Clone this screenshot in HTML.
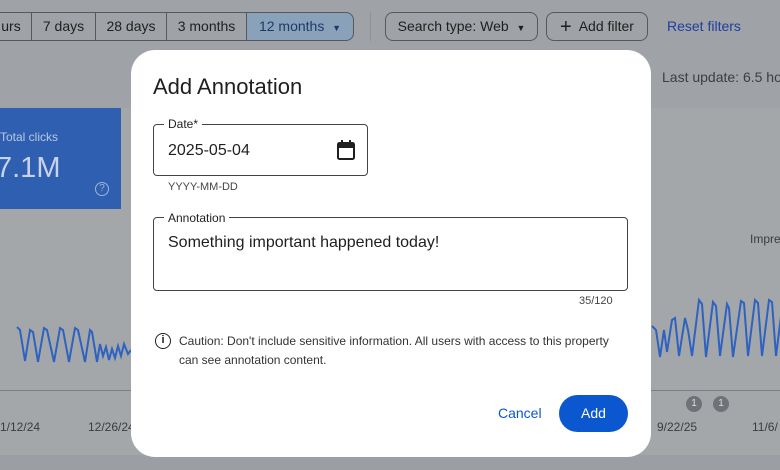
<!DOCTYPE html>
<html><head><style>
*{margin:0;padding:0;box-sizing:border-box}
body{width:780px;height:470px;overflow:hidden;background:#9fa2a6;font-family:"Liberation Sans",sans-serif;position:relative}
.a{position:absolute}
.chip{position:absolute;top:12px;height:29px;border:1px solid #55585c;font-size:14px;color:#1f1f1f;line-height:27px;text-align:center}
</style></head><body>
<div class="a" style="left:0;top:108px;width:780px;height:347px;background:#a4a7aa"></div>
<div class="a" style="left:0;top:455px;width:780px;height:15px;background:#9b9ea2"></div>
<div class="chip" style="left:-10px;width:42px;border-radius:0">urs</div>
<div class="chip" style="left:31px;width:65px">7 days</div>
<div class="chip" style="left:95px;width:72px">28 days</div>
<div class="chip" style="left:166px;width:81px">3 months</div>
<div class="chip" style="left:246px;width:108px;background:#8aa2b9;border-radius:0 8px 8px 0;color:#1d3a6b">12 months &nbsp;<span style="font-size:9px">▼</span></div>
<div class="a" style="left:370px;top:12px;width:1px;height:29px;background:#8e9195"></div>
<div class="chip" style="left:385px;width:153px;border-radius:8px">Search type: Web &nbsp;<span style="font-size:9px">▼</span></div>
<div class="chip" style="left:546px;width:102px;border-radius:8px"><span style="font-size:20px;vertical-align:-2px">+</span>&nbsp; Add filter</div>
<div class="a" style="left:667px;top:18px;font-size:14px;color:#1f3fa0">Reset filters</div>
<div class="a" style="left:662px;top:69px;font-size:14px;color:#3c3e41;white-space:nowrap">Last update: 6.5 ho</div>
<div class="a" style="left:0;top:108px;width:121px;height:101px;background:#2f5fb0"></div>
<div class="a" style="left:0;top:130px;font-size:12px;color:#b9c8e4">Total clicks</div>
<div class="a" style="left:-4px;top:152px;font-size:29px;color:#c7d3ea">7.1M</div>
<div class="a" style="left:95px;top:182px;width:14px;height:14px;border:1px solid #9fb3d8;border-radius:50%;font-size:10px;color:#9fb3d8;text-align:center;line-height:12px">?</div>
<div class="a" style="left:750px;top:232px;font-size:12px;color:#3a3c3f">Impre</div>
<div class="a" style="left:0;top:390px;width:780px;height:1px;background:#7c7f83"></div>
<div class="a" style="left:0;top:420px;font-size:12px;color:#3a3c3f">1/12/24</div>
<div class="a" style="left:88px;top:420px;font-size:12px;color:#3a3c3f">12/26/24</div>
<div class="a" style="left:657px;top:420px;font-size:12px;color:#3a3c3f">9/22/25</div>
<div class="a" style="left:752px;top:420px;font-size:12px;color:#3a3c3f">11/6/</div>
<div class="a" style="left:686px;top:396px;width:16px;height:16px;border-radius:50%;background:#6f7276;color:#ddd;font-size:10px;text-align:center;line-height:16px">1</div>
<div class="a" style="left:713px;top:396px;width:16px;height:16px;border-radius:50%;background:#6f7276;color:#ddd;font-size:10px;text-align:center;line-height:16px">1</div>
<svg class="a" style="left:0;top:0" width="780" height="470"><polyline fill="none" stroke="#2e62c0" stroke-width="2" points="17,327 20,330 25,361 30,330 33,332 38,362 44,328 47,330 54,362 60,328 63,330 69,362 75,328 78,330 85,362 90,330 92,332 97,362 100,344 103,356 106,347 109,360 112,349 115,358 118,346 121,356 124,344 128,354 131,350"/><polyline fill="none" stroke="#2e62c0" stroke-width="2" points="652,326 656,330 660,357 664,330 667,352 672,320 675,318 679,356 685,318 688,330 692,356 699,300 702,304 706,357 713,302 716,306 720,356 727,304 729,308 733,357 741,301 744,303 748,356 755,300 758,303 762,356 769,300 772,302 776,356 783,300"/></svg>
<div class="a" style="left:131px;top:50px;width:520px;height:407px;background:#fff;border-radius:24px">
<div class="a" style="left:22px;top:24px;font-size:22px;color:#1f1f1f">Add Annotation</div>
<div class="a" style="left:22px;top:74px;width:215px;height:52px;border:1px solid #444;border-radius:4px"></div>
<div class="a" style="left:33px;top:67px;background:#fff;padding:0 4px;font-size:12px;color:#1f1f1f">Date*</div>
<div class="a" style="left:37px;top:92px;font-size:16px;color:#1f1f1f">2025-05-04</div>
<svg class="a" style="left:205px;top:89px" width="20" height="22" viewBox="0 0 20 22"><rect x="2" y="4" width="16" height="16" rx="1.5" fill="none" stroke="#1f1f1f" stroke-width="2"/><rect x="2" y="4" width="16" height="5" fill="#1f1f1f"/><rect x="5" y="1" width="2" height="4" fill="#1f1f1f"/><rect x="13" y="1" width="2" height="4" fill="#1f1f1f"/></svg>
<div class="a" style="left:37px;top:131px;font-size:11px;color:#444">YYYY-MM-DD</div>
<div class="a" style="left:22px;top:167px;width:475px;height:74px;border:1px solid #444;border-radius:4px"></div>
<div class="a" style="left:33px;top:161px;background:#fff;padding:0 4px;font-size:12px;color:#1f1f1f">Annotation</div>
<div class="a" style="left:37px;top:184px;font-size:16px;color:#1f1f1f">Something important happened today!</div>
<div class="a" style="left:448px;top:245px;font-size:11px;color:#444">35/120</div>
<div class="a" style="left:24px;top:283px;width:16px;height:16px;border:1.5px solid #1f1f1f;border-radius:50%;font-size:11px;font-weight:bold;text-align:center;line-height:13px;color:#1f1f1f">i</div>
<div class="a" style="left:48px;top:282px;width:440px;font-size:12px;line-height:19px;color:#333">Caution: Don't include sensitive information. All users with access to this property can see annotation content.</div>
<div class="a" style="left:367px;top:355px;font-size:14px;color:#0b57d0">Cancel</div>
<div class="a" style="left:428px;top:345px;width:69px;height:37px;border-radius:19px;background:#0b57d0;color:#fff;font-size:14px;text-align:center;line-height:37px">Add</div>
</div>
</body></html>
